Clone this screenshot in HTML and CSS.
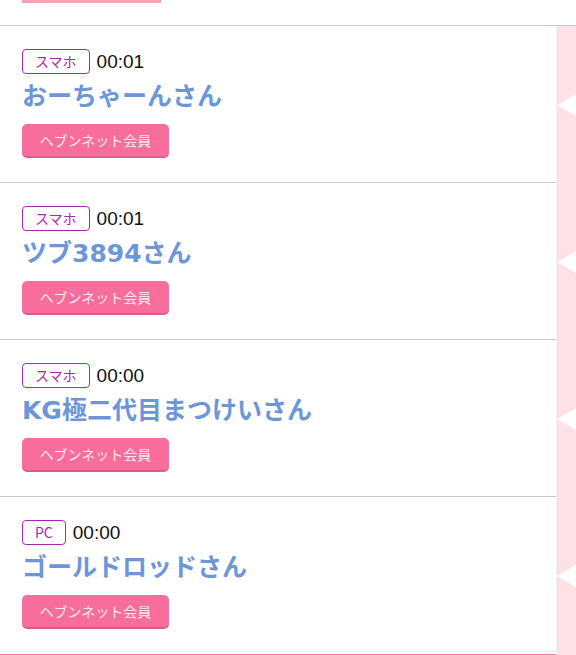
FILE: index.html
```html
<!DOCTYPE html>
<html lang="ja">
<head>
<meta charset="utf-8">
<link rel="stylesheet" href="styles.css">
</head>
<body>
<div class="top">
  <div class="top-btn"></div>
</div>
<div class="main">
  <div class="list">
    <div class="card">
      <div class="meta"><span class="badge">スマホ</span><span class="time">00:01</span></div>
      <div class="name">おーちゃーんさん</div>
      <div class="member">ヘブンネット会員</div>
    </div>
    <div class="card">
      <div class="meta"><span class="badge">スマホ</span><span class="time">00:01</span></div>
      <div class="name">ツブ3894さん</div>
      <div class="member">ヘブンネット会員</div>
    </div>
    <div class="card">
      <div class="meta"><span class="badge">スマホ</span><span class="time">00:00</span></div>
      <div class="name">KG極二代目まつけいさん</div>
      <div class="member">ヘブンネット会員</div>
    </div>
    <div class="card last">
      <div class="meta"><span class="badge">PC</span><span class="time">00:00</span></div>
      <div class="name">ゴールドロッドさん</div>
      <div class="member">ヘブンネット会員</div>
    </div>
    <div class="footer"></div>
  </div>
  <div class="strip">
    <div class="cell"><span class="tri"></span></div>
    <div class="cell"><span class="tri"></span></div>
    <div class="cell"><span class="tri"></span></div>
    <div class="cell"><span class="tri"></span></div>
  </div>
</div>
</body>
</html>
```
FILE: styles.css
```css
html, body {
  margin: 0;
  padding: 0;
  background: #fff;
  font-family: "Noto Sans CJK JP", "Noto Sans", sans-serif;
  overflow: hidden;
}
.top {
  height: 25px;
  border-bottom: 1px solid #c9c9c9;
}
.top-btn {
  margin-left: 22px;
  width: 139px;
  height: 3px;
  background: #f2a3b4;
}
.main {
  display: flex;
}
.list {
  flex: 1;
  border-right: 1px solid #f1f1f1;
}
.card {
  padding: 23px 22px 24px;
  border-bottom: 1px solid #c9c9c9;
  display: flex;
  flex-direction: column;
  align-items: flex-start;
}
.card.last {
  border-bottom: 1px solid #efefef;
  padding-bottom: 22px;
}
.meta {
  display: flex;
  align-items: center;
  gap: 7px;
  height: 25px;
}
.badge {
  box-sizing: border-box;
  height: 25px;
  padding: 0 12px;
  border: 1.5px solid #a52aad;
  border-radius: 4px;
  color: #a52aad;
  font-size: 14px;
  line-height: 22px;
}
.time {
  font-family: "Liberation Sans", sans-serif;
  font-size: 19px;
  color: #111;
  line-height: 25px;
}
.name {
  margin-top: 8px;
  font-family: "DejaVu Sans", "Noto Sans CJK JP", sans-serif;
  font-size: 25px;
  font-weight: bold;
  color: #6d96d8;
  line-height: 30px;
  height: 30px;
  white-space: nowrap;
}
.member {
  margin-top: 12px;
  box-sizing: border-box;
  height: 34px;
  width: 147px;
  background: #f76e9c;
  border-bottom: 2px solid #e05c88;
  border-radius: 5px;
  color: #fde8ef;
  font-size: 14px;
  line-height: 32px;
  text-align: center;
}
.footer {
  height: 4px;
  margin-top: 2px;
  background: #e97ea2;
}
.strip {
  width: 19px;
  background: #fde1e4;
  display: flex;
  flex-direction: column;
}
.cell {
  height: 157px;
  display: flex;
  align-items: center;
  justify-content: flex-end;
}
.tri {
  width: 0;
  height: 0;
  border-top: 11px solid transparent;
  border-bottom: 11px solid transparent;
  border-right: 19px solid #fff;
}
```
